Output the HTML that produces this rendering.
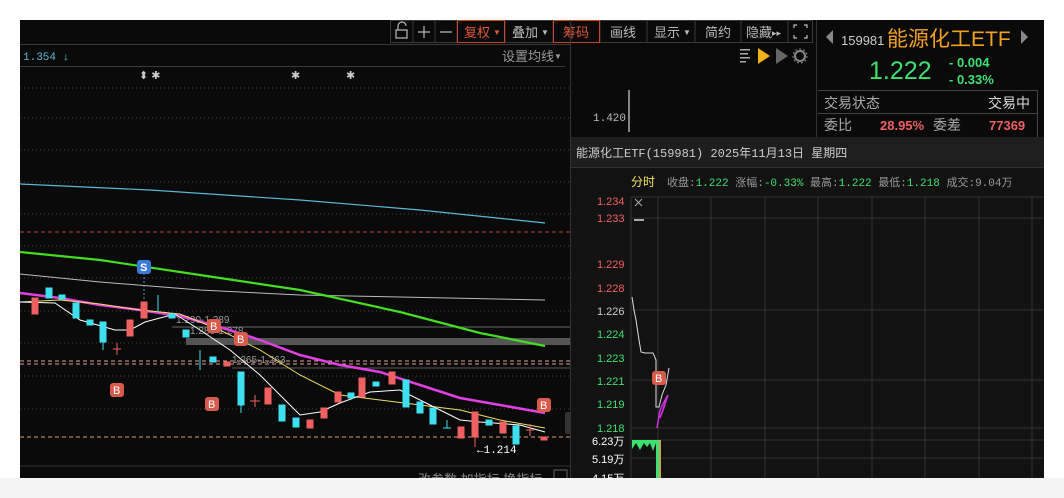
<!DOCTYPE html>
<html><head><meta charset="utf-8"><style>
body{margin:0;width:1064px;height:498px;background:#fff;overflow:hidden;font-family:"Liberation Sans","Noto Sans CJK SC",sans-serif;}
svg{position:absolute;left:0;top:0}
text{font-family:"Liberation Sans","Noto Sans CJK SC",sans-serif}
.m{font-family:"Liberation Mono","Noto Sans CJK SC",monospace}
</style></head><body>
<svg width="1064" height="498" viewBox="0 0 1064 498">
<rect x="20" y="20" width="1024" height="458" fill="#0a0a0a"/>
<!-- toolbar -->
<g stroke="#3a3a3a" fill="none">
<rect x="390.5" y="20.5" width="422" height="22"/>
<line x1="413" y1="21" x2="413" y2="42"/><line x1="435" y1="21" x2="435" y2="42"/><line x1="457" y1="21" x2="457" y2="42"/>
<line x1="505" y1="21" x2="505" y2="42"/><line x1="553" y1="21" x2="553" y2="42"/><line x1="600" y1="21" x2="600" y2="42"/>
<line x1="647" y1="21" x2="647" y2="42"/><line x1="695" y1="21" x2="695" y2="42"/><line x1="741" y1="21" x2="741" y2="42"/><line x1="788" y1="21" x2="788" y2="42"/>
</g>
<rect x="457.5" y="20.5" width="47" height="22" fill="none" stroke="#c8442e"/>
<rect x="553.5" y="20.5" width="46" height="22" fill="none" stroke="#c8442e"/>
<g fill="#bbb" font-size="13">
<text x="464" y="37" fill="#e0563c">复权</text><text x="493" y="35" font-size="8" fill="#e0563c">▼</text>
<text x="512" y="37">叠加</text><text x="541" y="35" font-size="8">▼</text>
<text x="563" y="37" fill="#e0563c">筹码</text>
<text x="610" y="37">画线</text>
<text x="654" y="37">显示</text><text x="683" y="35" font-size="8">▼</text>
<text x="705" y="37">简约</text>
<text x="746" y="37">隐藏</text><text x="772" y="36" font-size="9">▸▸</text>
</g>
<g stroke="#bbb" fill="none" stroke-width="1.2">
<rect x="396" y="30" width="11" height="8"/><path d="M398 30v-4a4 4 0 0 1 8 0"/>
<path d="M424 26v12M418 32h12M440 32h12"/>
<path d="M794 28v-3h3M807 28v-3h-3M794 35v3h3M807 35v3h-3"/>
</g>
<!-- left chart header -->
<line x1="20" y1="44.5" x2="570" y2="44.5" stroke="#3a3a3a"/>
<line x1="20" y1="66.5" x2="565" y2="66.5" stroke="#3a3a3a"/>
<text x="23" y="60" font-size="11" fill="#5ab8d8" class="m">1.354 ↓</text>
<text x="502" y="61" font-size="13" fill="#999">设置均线</text><text x="554" y="59" font-size="8" fill="#999">▼</text>
<text x="139" y="79" font-size="11" fill="#ccc">⬍ ✱</text>
<text x="291" y="79" font-size="11" fill="#ccc">✱</text><text x="346" y="79" font-size="11" fill="#ccc">✱</text>
<!-- grid dotted -->
<g stroke="#444" stroke-dasharray="1 3">
<line x1="20" y1="88" x2="570" y2="88"/><line x1="20" y1="118" x2="570" y2="118"/><line x1="20" y1="150" x2="570" y2="150"/>
<line x1="20" y1="182" x2="570" y2="182"/><line x1="20" y1="214" x2="570" y2="214"/><line x1="20" y1="246" x2="570" y2="246"/>
<line x1="20" y1="278" x2="570" y2="278"/><line x1="20" y1="311" x2="570" y2="311"/><line x1="20" y1="343" x2="570" y2="343"/>
<line x1="20" y1="376" x2="570" y2="376"/><line x1="20" y1="409" x2="570" y2="409"/>
</g>
<line x1="20" y1="232" x2="570" y2="232" stroke="#c04040" stroke-dasharray="4 3"/>
<line x1="20" y1="361" x2="570" y2="361" stroke="#e0a090" stroke-dasharray="4 3"/>
<line x1="20" y1="364" x2="570" y2="364" stroke="#e0a090" stroke-dasharray="4 3"/>
<line x1="20" y1="437" x2="570" y2="437" stroke="#d8a070" stroke-dasharray="4 3"/>
<rect x="186" y="338" width="384" height="7" fill="#555"/>
<line x1="172" y1="327" x2="570" y2="327" stroke="#666"/>
<line x1="232" y1="368" x2="570" y2="368" stroke="#555"/>
<text x="176" y="323" font-size="10" fill="#999">1.290-1.289</text>
<text x="190" y="334" font-size="10" fill="#999">1.280-1.278</text>
<text x="232" y="363" font-size="10" fill="#999">1.265-1.263</text>
<!-- MAs -->
<g fill="none">
<polyline stroke="#5ab8d8" stroke-width="1.2" points="20,184 150,190 300,200 420,210 545,223"/>
<polyline stroke="#bbb" points="20,274 100,282 200,290 300,295 400,297 545,300"/>
<polyline stroke="#44dd22" stroke-width="2.2" points="20,252 100,260 200,275 300,290 400,312 480,333 545,346"/>
<polyline stroke="#e040e0" stroke-width="2.5" points="20,293 60,298 100,305 140,310 180,316 220,327 260,340 300,355 340,365 380,372 420,385 460,398 500,405 545,413"/>
<polyline stroke="#eedd66" points="20,302 60,300 100,304 140,310 180,314 220,330 260,350 300,375 340,395 380,400 420,405 460,410 500,420 545,428"/>
<polyline stroke="#fff" points="20,302 55,303 80,320 115,330 130,330 145,322 175,314 200,330 230,350 260,375 290,405 300,415 320,412 340,403 370,392 400,390 430,405 460,420 480,422 520,425 545,432"/>
</g>
<!-- candles -->
<g fill="#3ee0f0" stroke="#3ee0f0">
<rect x="46" y="288" width="6" height="10"/><rect x="59" y="295" width="6" height="4"/><rect x="73" y="303" width="6" height="15"/>
<rect x="87" y="320" width="6" height="5"/><rect x="100" y="322" width="6" height="20"/><rect x="169" y="314" width="6" height="4"/>
<rect x="183" y="330" width="6" height="7"/><rect x="210" y="357" width="6" height="5"/><rect x="238" y="372" width="6" height="33"/>
<rect x="279" y="405" width="6" height="16"/><rect x="293" y="418" width="6" height="9"/><rect x="348" y="393" width="6" height="5"/>
<rect x="373" y="382" width="6" height="4"/><rect x="403" y="380" width="6" height="27"/><rect x="417" y="402" width="6" height="11"/>
<rect x="430" y="408" width="6" height="16"/><rect x="486" y="420" width="6" height="5"/><rect x="513" y="426" width="6" height="18"/>
<path d="M158 295v17M200 350v20M103 342v8M447 420v8M443 428h8M241 405v8" fill="none"/>
</g>
<g fill="#f06060" stroke="#f06060">
<rect x="32" y="298" width="6" height="16"/><rect x="127" y="320" width="6" height="16"/><rect x="141" y="302" width="6" height="16"/>
<rect x="224" y="362" width="6" height="4"/><rect x="265" y="388" width="6" height="16"/><rect x="307" y="420" width="6" height="8"/>
<rect x="321" y="408" width="6" height="10"/><rect x="335" y="392" width="6" height="10"/><rect x="359" y="378" width="6" height="19"/>
<rect x="389" y="372" width="6" height="12"/><rect x="458" y="427" width="6" height="11"/><rect x="472" y="412" width="6" height="25"/>
<rect x="500" y="422" width="6" height="11"/><rect x="541" y="437" width="6" height="3"/>
<path d="M117 343v12M113 349h8M255 395v12M250 401h10M530 424v12M526 430h8M475 437v10" fill="none"/>
</g>
<!-- signals -->
<line x1="144" y1="273" x2="144" y2="300" stroke="#5a8ae0" stroke-dasharray="2 2"/>
<rect x="137" y="260" width="14" height="14" rx="3" fill="#3a7ad8"/><text x="140" y="271" font-size="11" fill="#fff" font-weight="bold">S</text>
<g fill="#d85a4a"><rect x="110" y="383" width="14" height="14" rx="3"/><rect x="205" y="397" width="14" height="14" rx="3"/>
<rect x="234" y="332" width="14" height="14" rx="3"/><rect x="207" y="319" width="14" height="14" rx="3"/><rect x="537" y="398" width="14" height="14" rx="3"/></g>
<g fill="#fff" font-size="11"><text x="113" y="394">B</text><text x="208" y="408">B</text><text x="237" y="343">B</text><text x="210" y="330">B</text><text x="540" y="409">B</text></g>
<text x="477" y="453" font-size="11" fill="#fff" class="m">←1.214</text>
<line x1="20" y1="466" x2="570" y2="466" stroke="#333"/>
<text x="418" y="484" font-size="13" fill="#888">改参数  加指标  换指标</text>
<rect x="554" y="470" width="13" height="12" fill="none" stroke="#666"/>
<rect x="565" y="412" width="6" height="22" rx="2" fill="#333"/>
<!-- middle panel top -->
<line x1="570.5" y1="20" x2="570.5" y2="478" stroke="#333"/>
<line x1="629" y1="90" x2="629" y2="132" stroke="#fff"/>
<text x="593" y="121" font-size="11" fill="#bbb" class="m">1.420</text>
<g fill="#aaa"><rect x="740" y="49" width="10" height="1.5"/><rect x="740" y="53" width="8" height="1.5"/><rect x="740" y="57" width="10" height="1.5"/><rect x="740" y="61" width="6" height="1.5"/></g>
<path d="M758 48l12 8l-12 8z" fill="#f0b020"/><path d="M776 48l12 8l-12 8z" fill="#666"/>
<circle cx="800" cy="56" r="5" fill="none" stroke="#888" stroke-width="2"/><circle cx="800" cy="56" r="7" fill="none" stroke="#888" stroke-dasharray="2 2"/>
<!-- quote panel -->
<line x1="816.5" y1="20" x2="816.5" y2="137" stroke="#333"/>
<path d="M833 30v14l-7-7z" fill="#888"/><path d="M1021 30v14l7-7z" fill="#888"/>
<text x="841" y="45" font-size="13" fill="#ccc">159981</text>
<text x="887" y="46" font-size="21" fill="#f0a020">能源化工ETF</text>
<text x="869" y="79" font-size="25" fill="#3ee070">1.222</text>
<text x="949" y="67" font-size="13" fill="#3ee070" font-weight="bold">- 0.004</text>
<text x="949" y="84" font-size="13" fill="#3ee070" font-weight="bold">- 0.33%</text>
<line x1="818" y1="90.5" x2="1038" y2="90.5" stroke="#444"/><line x1="818" y1="113.5" x2="1038" y2="113.5" stroke="#444"/>
<line x1="1037.5" y1="90" x2="1037.5" y2="137" stroke="#444"/>
<text x="824" y="108" font-size="14" fill="#aaa">交易状态</text><text x="988" y="108" font-size="14" fill="#ddd">交易中</text>
<text x="824" y="130" font-size="14" fill="#aaa">委比</text><text x="880" y="130" font-size="13" fill="#f06060" font-weight="bold">28.95%</text>
<text x="933" y="130" font-size="14" fill="#aaa">委差</text><text x="989" y="130" font-size="13" fill="#f06060" font-weight="bold">77369</text>
<!-- popup -->
<rect x="571" y="137" width="473" height="341" fill="#121212"/>
<rect x="571" y="137" width="473" height="30" fill="#1e1e1e"/>
<line x1="571" y1="167.5" x2="1044" y2="167.5" stroke="#333"/>
<text x="576" y="157" font-size="12" fill="#ccc" class="m">能源化工ETF(159981) 2025年11月13日 星期四</text>
<text x="631" y="186" font-size="12" fill="#f0e060">分时</text>
<text x="667" y="186" font-size="11" fill="#999" class="m">收盘:<tspan fill="#3ee070">1.222</tspan> 涨幅:<tspan fill="#3ee070">-0.33%</tspan> 最高:<tspan fill="#3ee070">1.222</tspan> 最低:<tspan fill="#3ee070">1.218</tspan> 成交:9.04万</text>
<g stroke="#333"><line x1="631" y1="197" x2="1044" y2="197"/><line x1="631" y1="218" x2="1044" y2="218"/><line x1="631" y1="310" x2="1044" y2="310"/><line x1="631" y1="380" x2="1044" y2="380"/><line x1="631" y1="428" x2="1044" y2="428"/><line x1="631" y1="440" x2="1044" y2="440"/><line x1="631" y1="458" x2="1044" y2="458"/>
<line x1="631" y1="197" x2="631" y2="478"/><line x1="658" y1="197" x2="658" y2="478"/><line x1="711" y1="197" x2="711" y2="478"/><line x1="765" y1="197" x2="765" y2="478"/><line x1="818" y1="197" x2="818" y2="478"/><line x1="872" y1="197" x2="872" y2="478"/><line x1="925" y1="197" x2="925" y2="478"/><line x1="979" y1="197" x2="979" y2="478"/><line x1="1032" y1="197" x2="1032" y2="478"/></g>
<g font-size="11" class="m">
<text x="597" y="205" fill="#f06060">1.234</text><text x="597" y="222" fill="#f06060">1.233</text>
<text x="597" y="268" fill="#f06060">1.229</text><text x="597" y="292" fill="#f06060">1.228</text>
<text x="597" y="315" fill="#ccc">1.226</text><text x="597" y="338" fill="#3ee070">1.224</text>
<text x="597" y="362" fill="#3ee070">1.223</text><text x="597" y="385" fill="#3ee070">1.221</text>
<text x="597" y="408" fill="#3ee070">1.219</text><text x="597" y="432" fill="#3ee070">1.218</text>
<text x="592" y="445" fill="#fff">6.23万</text><text x="592" y="463" fill="#fff">5.19万</text><text x="592" y="482" fill="#fff">4.15万</text>
</g>
<path d="M635 199l7 7M642 199l-7 7" stroke="#aaa"/><path d="M634 220h10" stroke="#aaa" stroke-width="2"/>
<polyline fill="none" stroke="#ddd" points="632,297 634,310 636,320 639,340 641,352 645,353 653,353 656,360 656,407 659,407 662,395 666,385 669,368"/>
<polyline fill="none" stroke="#d030e0" stroke-width="1.5" points="657,428 660,410 664,402 668,395 660,418 665,405"/>
<rect x="652" y="371" width="14" height="14" rx="3" fill="#d85a4a"/><text x="655" y="382" font-size="11" fill="#fff">B</text>
<path d="M632 440h24v3l-3 8-3-8-3 4-3-4-4 7-4-7-4 6z" fill="#3ee070"/><rect x="656" y="440" width="3" height="38" fill="#3ee070"/><rect x="659" y="440" width="2" height="38" fill="#c8a060"/>
<rect x="0" y="478" width="1064" height="20" fill="#f4f4f4"/>
</svg>
</body></html>
